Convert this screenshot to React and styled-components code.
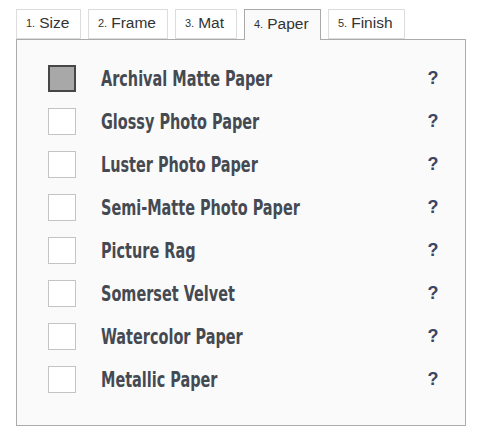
import { useState } from "react";
import styled, { createGlobalStyle } from "styled-components";

const GlobalStyle = createGlobalStyle`
  body {
    margin: 0;
    background: #ffffff;
    font-family: "Liberation Sans", Arial, sans-serif;
  }
`;

const Page = styled.div`
  width: 485px;
  height: 442px;
  padding: 9px 0 0 16px;
  box-sizing: border-box;
`;

const Tabs = styled.div`
  display: flex;
  gap: 7px;
  height: 30px;
  position: relative;
  z-index: 1;
`;

const Tab = styled.div`
  box-sizing: border-box;
  width: ${(p) => p.$w}px;
  height: ${(p) => (p.$active ? 31 : 30)}px;
  border: 1px solid ${(p) => (p.$active ? "#a9a9a9" : "#dcdcdc")};
  border-bottom: ${(p) => (p.$active ? "none" : "1px solid #dcdcdc")};
  background: ${(p) => (p.$active ? "#fafafa" : "#ffffff")};
  color: #333;
  display: flex;
  align-items: center;
  padding: 0 0 2px 9px;
  font-size: 15.5px;
  cursor: pointer;

  small {
    font-size: 11px;
    margin-right: 4px;
  }
`;

const Panel = styled.div`
  box-sizing: border-box;
  width: 450px;
  height: 387px;
  border: 1px solid #ababab;
  background: #fafafa;
  padding: 17px 0 0 31px;
  display: flex;
  flex-direction: column;
`;

const Row = styled.div`
  display: flex;
  align-items: center;
  height: 43px;
  cursor: pointer;
`;

const Box = styled.div`
  box-sizing: border-box;
  width: 28px;
  height: 27px;
  flex: none;
  background: ${(p) => (p.$on ? "#a8a8a8" : "#ffffff")};
  border: ${(p) => (p.$on ? "2px solid #474747" : "1px solid #c4c4c4")};
`;

const Label = styled.div`
  margin-left: 25px;
  flex: 1;
  overflow: hidden;
  white-space: nowrap;

  span {
    display: inline-block;
    transform: scaleX(0.73);
    transform-origin: left center;
    font-family: "DejaVu Sans Condensed", "DejaVu Sans", sans-serif;
    font-weight: 700;
    font-size: 22px;
    color: #454a52;
  }
`;

const Help = styled.div`
  width: 40px;
  margin-right: 12px;
  text-align: center;
  font-family: "Liberation Sans", Arial, sans-serif;
  font-weight: 700;
  font-size: 18px;
  color: #3b4562;
`;

const tabs = [
  ["1.", "Size", 65],
  ["2.", "Frame", 80],
  ["3.", "Mat", 62],
  ["4.", "Paper", 77],
  ["5.", "Finish", 77],
];

const papers = [
  "Archival Matte Paper",
  "Glossy Photo Paper",
  "Luster Photo Paper",
  "Semi-Matte Photo Paper",
  "Picture Rag",
  "Somerset Velvet",
  "Watercolor Paper",
  "Metallic Paper",
];

export default function App() {
  const [sel, setSel] = useState(0);
  return (
    <Page>
      <GlobalStyle />
      <Tabs>
        {tabs.map(([n, t, w], i) => (
          <Tab key={t} $w={w} $active={i === 3}>
            <small>{n}</small>
            {t}
          </Tab>
        ))}
      </Tabs>
      <Panel>
        {papers.map((p, i) => (
          <Row key={p} onClick={() => setSel(i)}>
            <Box $on={sel === i} />
            <Label>
              <span>{p}</span>
            </Label>
            <Help>?</Help>
          </Row>
        ))}
      </Panel>
    </Page>
  );
}
